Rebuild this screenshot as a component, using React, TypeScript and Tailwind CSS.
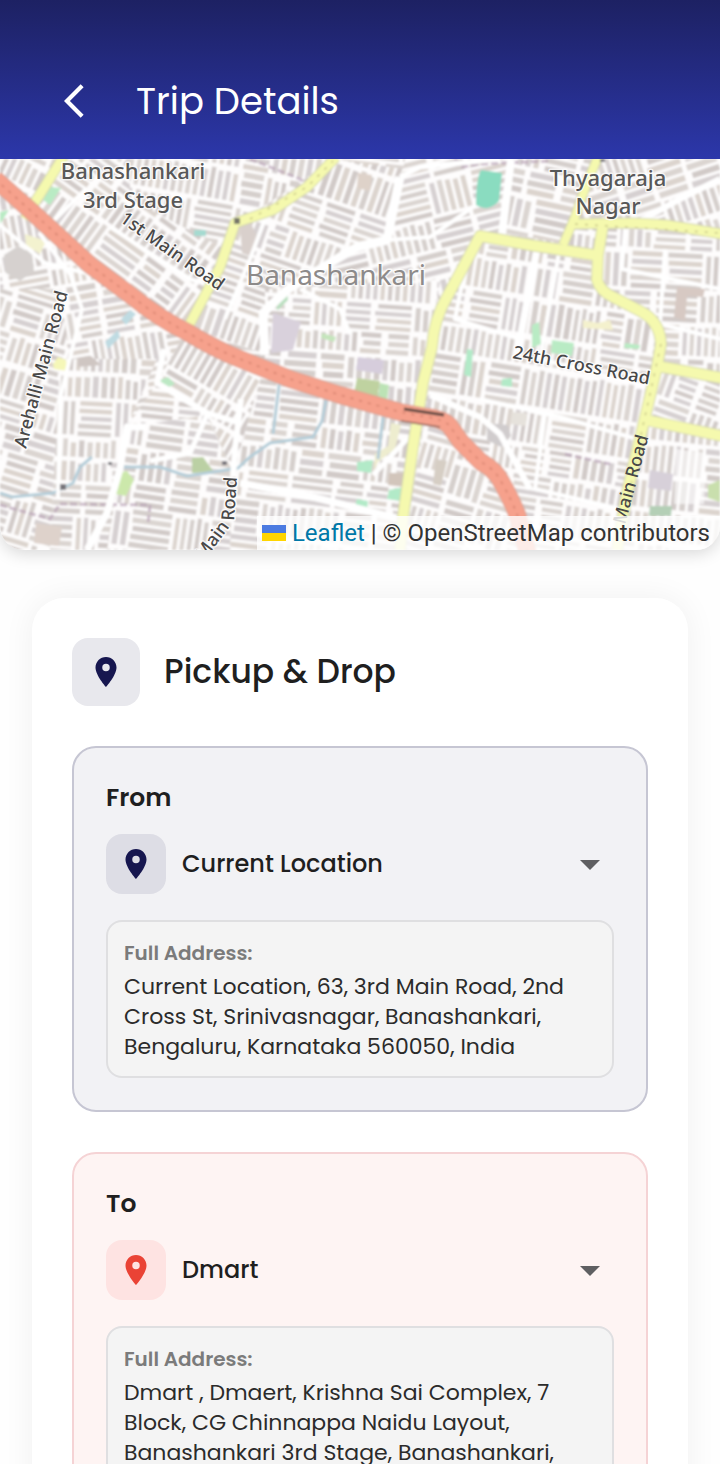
import { useState } from "react";
import { MdArrowBackIosNew, MdArrowDropDown, MdLocationOn } from "react-icons/md";

type District = { points: string; cx: number; cy: number; r: number; angle: number; seed: number };

const districts: District[] = [
  { points: "0,0 720,0 720,391 0,391", cx: 360, cy: 195, r: 430, angle: 6, seed: 3 },
  { points: "0,0 62,0 30,50 0,22", cx: 30, cy: 25, r: 50, angle: 25, seed: 5 },
  { points: "62,0 150,0 240,63 187,170 90,106 30,51", cx: 130, cy: 80, r: 130, angle: 36, seed: 11 },
  { points: "130,0 335,0 240,63 225,90 130,40", cx: 230, cy: 40, r: 110, angle: 10, seed: 17 },
  { points: "240,63 335,0 405,10 387,81 287,131 263,154 265,195 187,170", cx: 300, cy: 100, r: 140, angle: 19, seed: 23 },
  { points: "405,0 510,0 502,74 480,77 447,138 433,191 400,250 265,196 263,154 330,104 387,81", cx: 400, cy: 120, r: 170, angle: -14, seed: 31 },
  { points: "265,130 440,120 423,255 265,205", cx: 350, cy: 190, r: 110, angle: 4, seed: 37 },
  { points: "510,0 597,0 563,84 502,74", cx: 545, cy: 45, r: 70, angle: 12, seed: 41 },
  { points: "597,0 720,0 720,74 575,60", cx: 655, cy: 35, r: 85, angle: -18, seed: 43 },
  { points: "480,77 600,96 613,138 660,171 642,271 617,391 526,391 480,300 425,257 433,191 447,138", cx: 540, cy: 235, r: 190, angle: 9, seed: 47 },
  { points: "603,66 720,76 720,218 657,208 660,171 597,121", cx: 660, cy: 140, r: 100, angle: 3, seed: 53 },
  { points: "657,208 720,218 720,276 642,268", cx: 680, cy: 240, r: 55, angle: 20, seed: 59 },
  { points: "642,268 720,276 720,391 617,391", cx: 675, cy: 330, r: 80, angle: 6, seed: 61 },
  { points: "0,24 90,106 187,171 157,224 127,268 60,260 0,200", cx: 90, cy: 150, r: 140, angle: -10, seed: 67 },
  { points: "0,130 60,130 70,200 60,391 0,391", cx: 30, cy: 260, r: 145, angle: 17, seed: 71 },
  { points: "60,200 157,200 127,268 107,391 50,391", cx: 100, cy: 300, r: 110, angle: 3, seed: 73 },
  { points: "187,171 265,205 233,314 207,254 157,224", cx: 210, cy: 235, r: 90, angle: 30, seed: 79 },
  { points: "127,268 207,256 233,314 230,391 107,391", cx: 170, cy: 325, r: 90, angle: 8, seed: 83 },
  { points: "265,205 425,257 403,391 230,391 233,314", cx: 330, cy: 295, r: 130, angle: 7, seed: 89 },
  { points: "425,260 480,300 526,391 403,391", cx: 465, cy: 330, r: 80, angle: -74, seed: 97 },
];

const blockFills = ["#d5cfcc", "#dbd5d1", "#d1cac8", "#dcd4ce", "#d6d0d1"];

function createRandom(seed: number) {
  let state = seed * 7919;
  return () => {
    state = (state * 1103515245 + 12345) % 2147483648;
    return state / 2147483648;
  };
}

function buildBlocks({ cx, cy, r, seed }: District) {
  const random = createRandom(seed);
  const paths = blockFills.map(() => "");
  for (let y = cy - r; y < cy + r; ) {
    const rowHeight = 22 + Math.floor(random() * 20);
    for (let x = cx - r - random() * 20; x < cx + r; ) {
      const cellWidth = 22 + Math.floor(random() * 26);
      const vertical = random() > 0.5;
      const span = vertical ? cellWidth : rowHeight;
      const count = Math.max(2, Math.round(span / 8));
      const step = span / count;
      for (let i = 0; i < count; i++) {
        const tone = Math.floor(random() * blockFills.length);
        const trim = random() * 4;
        if (vertical) {
          paths[tone] += `M${(x + i * step).toFixed(1)} ${(y + trim).toFixed(1)}h${(step - 3).toFixed(1)}v${(rowHeight - 4 - trim).toFixed(1)}h${(3 - step).toFixed(1)}z`;
        } else {
          paths[tone] += `M${(x + trim).toFixed(1)} ${(y + i * step).toFixed(1)}h${(cellWidth - 4 - trim).toFixed(1)}v${(step - 3).toFixed(1)}h${(trim + 4 - cellWidth).toFixed(1)}z`;
        }
      }
      x += cellWidth;
    }
    y += rowHeight;
  }
  return paths;
}

const districtPaths = districts.map(buildBlocks);

const whiteRoads: [string, number][] = [
  ["M400 18L387 81L357 88L330 104L287 131L263 154L265 196", 9],
  ["M400 18L420 8L500 0", 5],
  ["M387 81L430 78L476 46", 4],
  ["M511 0L502 76", 8],
  ["M537 90L517 196", 7],
  ["M164 190L157 224L207 254L240 264", 6],
  ["M207 256L190 294L150 302", 5],
  ["M146 268L127 268L120 310L107 354L87 391", 7],
  ["M241 240L235 290L233 318", 6],
  ["M240 324L313 338L400 360", 7],
  ["M430 236L480 258L500 275L530 330", 6],
  ["M373 316L407 280", 5],
  ["M300 130L340 150L350 175", 4],
  ["M110 68L190 120L215 128", 4],
  ["M86 30L40 75L70 115L82 150L60 240L58 340", 4],
  ["M0 66L45 104L86 114", 4],
  ["M265 60L250 100L225 160", 4],
  ["M560 88L540 200L600 215L650 228", 4],
  ["M470 85L455 160L520 180", 4],
  ["M720 20L680 40L640 62", 6],
  ["M625 70L622 110L720 130", 4],
  ["M665 90L660 165L720 180", 4],
  ["M480 240L560 258L637 280", 4],
  ["M545 255L535 330L620 350", 4],
];

const yellowRoads: [string, number][] = [
  ["M64 -3L30 51L25 60", 9],
  ["M187 170L220 108L235 64L273 51L307 28L336 -2", 9],
  ["M400 391L403 358L413 288L423 224L432 188Q434 160 447 138L480 77L530 86L601 97", 10],
  ["M598 -2L587 24L575 58L563 86", 8],
  ["M572 65L633 64L667 66L722 75", 9],
  ["M603 66L598 96L597 121Q600 132 613 138L640 152Q660 162 661 185L657 208L642 271L627 334L617 391", 10],
  ["M657 207L722 219", 10],
  ["M646 261L722 277", 10],
];

const redRoad =
  "M-5 20L30 51L90 106L133 138Q160 160 187 173Q215 190 240 200L290 220L340 236L400 253L427 258Q442 260 449 266L461 283L481 303Q496 311 502 324Q512 342 517 355L528 395";

const stream =
  "M0 334L12 338L53 334L73 324L80 308L92 298 M118 308L160 308L187 317L213 313L238 309L250 298L270 284L313 278L322 262L327 236 M280 219L273 275 M383 258L378 300";

const areas: [string, string][] = [
  ["M481 11L502 14L499 42Q488 54 476 46Q476 20 481 11z", "#8adcc0"],
  ["M50 28L61 29L50 46L43 41z", "#b9ebc4"],
  ["M0 53L9 51L0 65z", "#b9ebc4"],
  ["M25 75L46 82L40 95L26 86z", "#f3f2cf"],
  ["M4 96L18 87L32 95L34 112L20 122L6 114z", "#d6d1cf"],
  ["M194 71h12v6h-12z", "#a5dad0"],
  ["M121 160L130 151L136 155L126 166z M105 183L118 171L120 178L108 190z", "#bfdbe2"],
  ["M273 154L301 163L293 191L271 194z", "#d9d1dc"],
  ["M276 149L287 133L288 141L278 151z", "#b9dfbf"],
  ["M322 174L336 178L334 183L321 179z", "#c5e5bc"],
  ["M240 66L250 62L258 80L250 97L242 94z", "#d9d0cc"],
  ["M358 14L372 16L370 32L357 29z", "#ded2c9"],
  ["M53 205L58 198L66 201L68 212L54 210z", "#f5f7b8"],
  ["M78 199L91 197L101 206L78 208z", "#cfc6c2"],
  ["M116 314L127 312L134 321L126 337L115 335z", "#cce8ab"],
  ["M192 299L203 298L214 313L192 314z", "#bbd0a4"],
  ["M160 221L168 218L175 225L163 231z", "#bce8c4"],
  ["M358 198L384 201L382 215L356 211z", "#d6cddc"],
  ["M357 219L380 222L377 241L354 234z", "#bfd2a0"],
  ["M380 224L389 226L387 242L378 239z", "#bce3b5"],
  ["M357 303L373 301L371 314L357 312z M357 340L368 342L367 353L354 351z M389 331L404 328L402 342L387 340z", "#b2eac8"],
  ["M391 264L401 266L395 290L378 303L374 312L375 295L388 287z", "#eeedcf"],
  ["M389 314L405 314L404 328L388 326z", "#d2c5bb"],
  ["M467 190L473 191L471 218L464 216z M502 220L512 219L512 228L501 227z", "#b2eac8"],
  ["M532 166L539 163L541 185L532 189z M552 181L574 184L572 197L551 194z M625 184L640 186L639 190L624 189z", "#b9ebc4"],
  ["M583 161L598 164L610 161L613 171L583 169z", "#f4f1cd"],
  ["M487 264L508 266L511 277L501 288L487 281z", "#d0cccd"],
  ["M512 253L527 254L526 267L510 265z", "#e6e2dc"],
  ["M650 311L673 315L671 332L648 329z", "#d7d0d9"],
  ["M650 347L672 347L671 357L649 357z", "#b4cfb6"],
  ["M720 321L708 326L708 339L720 343z", "#c9dfad"],
  ["M436 300L447 302L441 327L433 325z", "#d6cec4"],
  ["M36 364L62 368L59 387L34 384z", "#ded2cb"],
  ["M677 128L705 130L703 138L687 137L685 162L674 158z", "#d7c9c3"],
  ["M676 290L706 294L704 345L674 345z", "#ffffff99"],
];

function StreetMap() {
  return (
    <svg viewBox="0 0 720 391" preserveAspectRatio="xMidYMid slice" className="block size-full" role="img" aria-label="Map of Banashankari">
      <defs>
        {districts.map((district) => (
          <clipPath key={district.seed} id={`district-${district.seed}`}>
            <polygon points={district.points} />
          </clipPath>
        ))}
        <filter id="soften" x="0" y="0" width="100%" height="100%">
          <feGaussianBlur stdDeviation="0.9" />
        </filter>
      </defs>
      <g filter="url(#soften)">
        {districts.map((district, index) => (
          <g key={district.seed} clipPath={`url(#district-${district.seed})`}>
            <polygon points={district.points} fill="#fefdfd" />
            <g transform={`rotate(${district.angle} ${district.cx} ${district.cy})`}>
              {districtPaths[index].map((d, tone) => (
                <path key={tone} d={d} fill={blockFills[tone]} />
              ))}
            </g>
          </g>
        ))}
        {areas.map(([d, fill]) => (
          <path key={d} d={d} fill={fill} />
        ))}
        <path d={stream} fill="none" stroke="#b5ced9" strokeWidth="3" />
        <path
          d="M250 0L300 20L310 28 M455 0L462 8L480 5L550 2 M0 346L50 360L60 345L150 346L148 365 M565 295L610 305"
          fill="none"
          stroke="#b9a3b6"
          strokeWidth="3"
          strokeDasharray="7 3"
          opacity="0.7"
        />
        <g fill="none" stroke="#ffffff" strokeLinejoin="round">
          {whiteRoads.map(([d, width]) => (
            <path key={d} d={d} strokeWidth={width} />
          ))}
        </g>
        <g fill="none" strokeLinejoin="round">
          {yellowRoads.map(([d, width]) => (
            <path key={d} d={d} stroke="#d3d6ac" strokeWidth={width + 2} />
          ))}
          {yellowRoads.map(([d, width]) => (
            <path key={d} d={d} stroke="#f5f9ae" strokeWidth={width} />
          ))}
          <path d="M661 185L642 271L620 380 M575 65L720 74 M250 60L307 28L333 2" stroke="#c9c789" strokeWidth="1.5" strokeDasharray="3 7" />
          <path d={redRoad} stroke="#dba08f" strokeWidth="18" />
          <path d={redRoad} stroke="#f6a18c" strokeWidth="16" />
          <path d={redRoad} stroke="#d6826f" strokeWidth="1.5" strokeDasharray="3 6" />
          <path d="M404 250L444 256" stroke="#5f4a43" strokeWidth="3" />
          <path d="M401 262L440 268" stroke="#93675b" strokeWidth="1.5" />
        </g>
        <path d="M234 59h6v6h-6z" fill="#77776a" />
        <path d="M600 0h5v3h-5z M108 303h4v3h-4z M222 302h5v4h-5z M60 325h6v6h-6z" fill="#77747a" />
      </g>
      <g fontFamily="'Noto Sans', sans-serif" fontWeight="500" fill="#585858" stroke="#ffffff" strokeOpacity="0.7" strokeWidth="3" strokeLinejoin="round" paintOrder="stroke">
        <g fontSize="22" textAnchor="middle">
          <text x="133" y="20">Banashankari</text>
          <text x="133" y="49">3rd Stage</text>
          <text x="608" y="27">Thyagaraja</text>
          <text x="608" y="55">Nagar</text>
          <text x="336" y="126" fontSize="28" fontWeight="400" fill="#8d8a8a">Banashankari</text>
        </g>
        <g fontSize="18" fill="#484848">
          <text transform="translate(119 62) rotate(35)">1st Main Road</text>
          <text transform="translate(26 290) rotate(-75)">Arehalli Main Road</text>
          <text transform="translate(512 199) rotate(11)">24th Cross Road</text>
          <text transform="translate(204 402) rotate(-53)">Main</text>
          <text transform="translate(234 362) rotate(-86)">Road</text>
          <text transform="translate(625 366) rotate(-75)" strokeOpacity="0">Main Road</text>
        </g>
      </g>
    </svg>
  );
}

type Tone = "navy" | "red";

const stopStyles: Record<Tone, { card: string; badge: string }> = {
  navy: { card: "border-[#c6c6d3] bg-[#f2f2f5]", badge: "bg-[#dddde5] text-[#16164f]" },
  red: { card: "border-[#f5d3d5] bg-[#fef4f3]", badge: "bg-[#fee3e2] text-[#ea4335]" },
};

type StopProps = { id: string; label: string; place: string; address: string; tone: Tone };

function StopCard({ id, label, place, address, tone }: StopProps) {
  const [value, setValue] = useState(place);
  const styles = stopStyles[tone];
  return (
    <section className={`flex flex-col rounded-3xl border-2 p-8 ${styles.card}`}>
      <label htmlFor={id} className="text-[25px] leading-9 font-semibold text-[#1f1f1f]">
        {label}
      </label>
      <div className="mt-[18px] flex items-center gap-4">
        <span className={`flex size-[60px] shrink-0 items-center justify-center rounded-2xl ${styles.badge}`}>
          <MdLocationOn size={36} aria-hidden />
        </span>
        <div className="grid min-w-0 flex-1 items-center">
          <select
            id={id}
            value={value}
            onChange={(event) => setValue(event.target.value)}
            className="col-start-1 row-start-1 h-[60px] w-full appearance-none bg-transparent text-2xl font-medium text-[#1f1f1f] outline-none"
          >
            <option>{place}</option>
          </select>
          <MdArrowDropDown size={48} aria-hidden className="pointer-events-none col-start-1 row-start-1 justify-self-end text-[#5f5f61]" />
        </div>
      </div>
      <div className="mt-[26px] flex flex-col gap-1 rounded-2xl border-2 border-[#dfdfe1] bg-[#f4f4f4] px-4 pt-4 pb-3.5">
        <p className="text-[20px] leading-[30px] font-semibold text-[#7b7b7b]">Full Address:</p>
        <p className="text-[22px] leading-[30px] text-[#2b2b2b]">{address}</p>
      </div>
    </section>
  );
}

export default function App() {
  return (
    <div className="flex h-screen flex-col bg-[#fefefe] font-['Poppins','Inter',sans-serif]">
      <header className="flex shrink-0 items-center gap-[42px] bg-linear-to-b from-[#1d2163] to-[#2c37aa] px-[54px] pt-[73px] pb-[30px] text-white">
        <button type="button" aria-label="Back" className="shrink-0">
          <MdArrowBackIosNew size={40} aria-hidden />
        </button>
        <h1 className="text-[37px] leading-[56px] font-normal">Trip Details</h1>
      </header>
      <main className="flex min-h-0 flex-1 flex-col overflow-y-auto [scrollbar-width:none]">
        <div className="relative h-[391px] shrink-0 rounded-b-3xl shadow-[0_4px_16px_rgba(0,0,0,0.15)]">
          <div className="size-full overflow-hidden rounded-b-3xl">
            <StreetMap />
          </div>
          <p className="absolute right-0 bottom-0 flex items-center rounded-br-3xl bg-white/80 pr-2.5 pl-[5px] font-['Roboto',sans-serif] text-[24px] leading-[34px] whitespace-pre text-[#333333]">
            <svg viewBox="0 0 12 8" className="mr-1.5 h-4 w-6" aria-hidden>
              <path fill="#4c7be1" d="M0 0h12v4H0z" />
              <path fill="#ffd500" d="M0 4h12v4H0z" />
            </svg>
            <a href="#leaflet" className="text-[#0078a8]">Leaflet</a>
            <span> | © OpenStreetMap contributors</span>
          </p>
        </div>
        <div className="px-8 py-12">
          <div className="flex flex-col gap-10 rounded-4xl bg-white p-10 shadow-[0_0_32px_rgba(0,0,0,0.06)]">
            <div className="flex items-center gap-6">
              <span className="flex size-[68px] shrink-0 items-center justify-center rounded-2xl bg-[#e8e8ed] text-[#16164f]">
                <MdLocationOn size={36} aria-hidden />
              </span>
              <h2 className="text-[33px] leading-[48px] font-medium text-[#1f1f1f]">Pickup &amp; Drop</h2>
            </div>
            <StopCard
              id="pickup"
              label="From"
              tone="navy"
              place="Current Location"
              address="Current Location, 63, 3rd Main Road, 2nd Cross St, Srinivasnagar, Banashankari, Bengaluru, Karnataka 560050, India"
            />
            <StopCard
              id="drop"
              label="To"
              tone="red"
              place="Dmart"
              address="Dmart , Dmaert, Krishna Sai Complex, 7 Block, CG Chinnappa Naidu Layout, Banashankari 3rd Stage, Banashankari,"
            />
          </div>
        </div>
      </main>
    </div>
  );
}
